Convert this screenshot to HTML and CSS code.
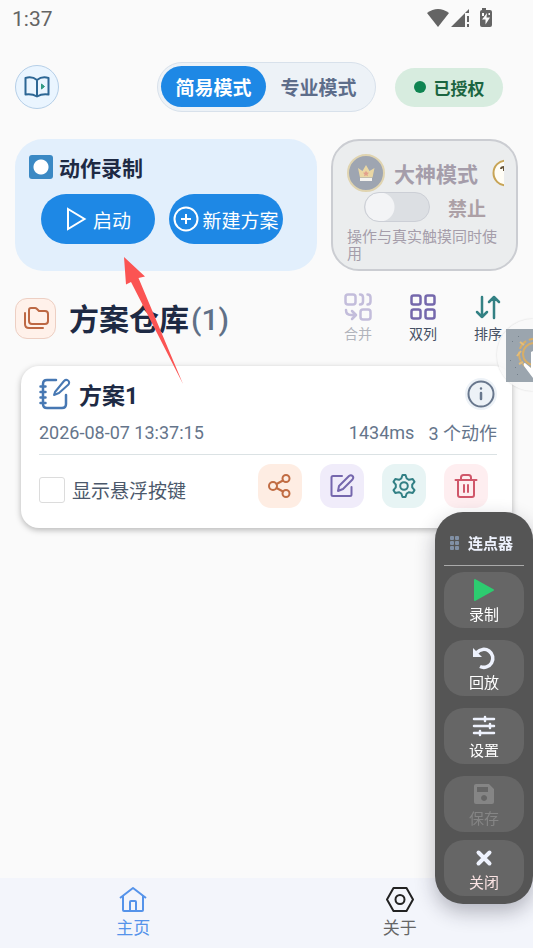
FILE: index.html
```html
<!DOCTYPE html>
<html lang="zh-CN">
<head>
<meta charset="utf-8">
<meta name="viewport" content="width=device-width, initial-scale=1">
<title>连点器</title>
<link rel="stylesheet" href="styles.css">
</head>
<body>
<div class="status">
  <span class="time">1:37</span>
  <svg class="status-icons" width="68" height="22" viewBox="0 0 68 22" fill="#646464">
    <path d="M0 5Q11-3 22 5L11 19Z"/>
    <path d="M24 19L38 5V19ZM38 5L42 1V5ZM40 8h2v6h-2zM40 16h2v3h-2z"/>
    <path d="M55 0h4v2h4q2 0 2 2v13q0 2-2 2h-8q-2 0-2-2V4q0-2 2-2Z"/>
    <path d="M60 5L55 11.500h3.500v5L63 9.500h-3.500Z" fill="#fafafa"/>
    <path d="M55 5h2v3h-2zM61.500 5h1.500v2h-1.500z" fill="#fafafa"/>
  </svg>
</div>

<header class="header">
  <button class="guide" type="button" aria-label="教程">
    <svg width="26" height="22" viewBox="0 0 26 22" fill="none" stroke="#2d6795" stroke-width="2" stroke-linejoin="round">
      <path d="M13 4Q8 0 1.500 2V18.500Q8 17.500 13 20.500Q18 17.500 24.500 18.500V2Q18 0 13 4ZV20"/>
      <path d="M17.500 8l3 2.500-3 2.500z" fill="#2f9a82" stroke="#2f9a82" stroke-width="1"/>
    </svg>
  </button>
  <div class="modes">
    <button class="mode mode-on" type="button">简易模式</button>
    <button class="mode" type="button">专业模式</button>
  </div>
  <div class="license"><span class="dot"></span>已授权</div>
</header>

<main class="main">
  <div class="panels">
    <section class="record">
      <h2 class="record-title"><span class="rec-icon"></span>动作录制</h2>
      <div class="record-actions">
        <button class="pill" type="button">
          <svg width="22" height="24" viewBox="0 0 22 24" fill="none" stroke="#fff" stroke-width="2"><path d="M3 2L19.500 12L3 22Z"/></svg>启动</button>
        <button class="pill pill-new" type="button">
          <svg width="26" height="26" viewBox="0 0 26 26" fill="none" stroke="#fff" stroke-width="2"><circle cx="13" cy="13" r="11.500"/><path d="M13 8v10M8 13h10"/></svg>新建方案</button>
      </div>
    </section>
    <section class="expert">
      <div class="expert-head">
        <svg class="crown" width="38" height="38" viewBox="0 0 38 38"><circle cx="19" cy="19" r="18" fill="#9ea5b1" stroke="#e0d4b0" stroke-width="2"/><path d="M11 14l4.500 3L19 11l3.500 6 5-3-2 9.500H13Z" fill="#ead7a4"/><path d="M19 16.500l1 2 2 .3-1.500 1.500.4 2-1.900-1-1.900 1 .4-2-1.500-1.500 2-.3Z" fill="#e2a08c"/><path d="M13 24h12v3H13Z" fill="#f5f3ef"/></svg>
        <h2 class="expert-title">大神模式</h2>
        <svg class="help" width="12" height="28" viewBox="0 0 12 28"><circle cx="14" cy="14" r="12.500" fill="#fffdf5" stroke="#c7a455" stroke-width="2"/><path d="M9 10q0-2 3-2v4" fill="none" stroke="#65533a" stroke-width="2"/></svg>
      </div>
      <label class="expert-switch"><input class="switch" type="checkbox" disabled>禁止</label>
      <p class="expert-note">操作与真实触摸同时使用</p>
    </section>
  </div>

  <div class="library">
    <span class="folder">
      <svg width="26" height="24" viewBox="0 0 26 24" fill="none" stroke="#bd6844" stroke-width="2" stroke-linejoin="round" stroke-linecap="round"><path d="M6 4q0-2 2-2h4q1 0 2 1l2 2h6q3 0 3 3v7q0 3-3 3H9q-3 0-3-3Z"/><path d="M2 7v11q0 4 4 4h14"/></svg>
    </span>
    <h1 class="library-title">方案仓库<span class="count">(1)</span></h1>
    <div class="tools">
      <button class="tool" type="button" disabled>
        <svg width="28" height="28" viewBox="0 0 28 28" fill="none" stroke="#c3bddb" stroke-width="2.500" stroke-linecap="round" stroke-linejoin="round"><rect x="1.500" y="1.500" width="10" height="10" rx="2.500"/><rect x="16.500" y="16.500" width="10" height="10" rx="2.500"/><path d="M16 1.500q3 0 3 3v4q0 3-3 3M23.500 1.500q3 0 3 3v4q0 3-3 3M2 17q0 5 5 5h4M8 18l4 4-4 4"/></svg>
        合并</button>
      <button class="tool" type="button">
        <svg width="28" height="28" viewBox="0 0 28 28" fill="none" stroke="#7568ac" stroke-width="2.500"><rect x="2.500" y="2.500" width="9" height="9" rx="2"/><rect x="16.500" y="2.500" width="9" height="9" rx="2"/><rect x="2.500" y="16.500" width="9" height="9" rx="2"/><rect x="16.500" y="16.500" width="9" height="9" rx="2"/></svg>
        双列</button>
      <button class="tool" type="button">
        <svg width="28" height="28" viewBox="0 0 28 28" fill="none" stroke="#338184" stroke-width="2.500" stroke-linecap="round" stroke-linejoin="round"><path d="M8 4v20M3 19l5 5 5-5M20 25V4M15 9l5-5 5 5"/></svg>
        排序</button>
    </div>
  </div>

  <article class="plan">
    <div class="plan-head">
      <svg width="32" height="32" viewBox="0 0 32 32" fill="none" stroke="#4778b3" stroke-width="2.500" stroke-linecap="round" stroke-linejoin="round"><path d="M17 2H8Q4 2 4 6v20q0 4 4 4h15q4 0 4-4V17"/><path d="M1.500 8.500h5M1.500 14h5M1.500 19.500h5M1.500 25h5"/><path d="M16 14l9-11q2-2 4-.5t.500 4L20 15l-5 2Z" stroke-width="2"/></svg>
      <h3 class="plan-title">方案1</h3>
      <button class="info" type="button" aria-label="详情">
        <svg width="32" height="32" viewBox="0 0 32 32"><circle cx="16" cy="16" r="16" fill="#edf2f7"/><circle cx="16" cy="16" r="12.500" fill="none" stroke="#68778d" stroke-width="2"/><path d="M16 15v6M16 10.500v.1" stroke="#68778d" stroke-width="2.500" stroke-linecap="round"/></svg>
      </button>
    </div>
    <div class="plan-meta"><time>2026-08-07 13:37:15</time><span class="duration">1434ms</span><span>3 个动作</span></div>
    <div class="plan-foot">
      <label class="show"><input class="check" type="checkbox">显示悬浮按键</label>
      <div class="plan-actions">
        <button class="act share" type="button" aria-label="分享"><svg width="26" height="26" viewBox="0 0 26 26"><circle cx="6" cy="13" r="4"/><circle cx="19" cy="5.500" r="3.500"/><circle cx="19" cy="20.500" r="3.500"/><path d="M9.500 11L16 7.500M9.500 15l6.500 3.500"/></svg></button>
        <button class="act edit" type="button" aria-label="编辑"><svg width="26" height="26" viewBox="0 0 26 26"><path d="M13 3H4Q2.500 3 2.500 4.500v17Q2.500 23 4 23h17q1.500 0 1.500-1.500V14"/><path d="M9 18l1-5L20 3q2-1.500 3.500 0t0 3.500L14 16Z"/></svg></button>
        <button class="act config" type="button" aria-label="设置"><svg width="26" height="26" viewBox="0 0 26 26"><circle cx="13" cy="13" r="3.800"/><path d="M11.500 2h3l1.200 3.500 2.300 1.300 3.700-.8 1.800 2.900-2.300 2.800v2.600l2.300 2.800-1.800 2.900-3.700-.8-2.300 1.300L14.500 24h-3l-1.200-3.500L8 19.200l-3.700.8-1.800-2.900 2.300-2.800v-2.600L2.500 8.900 4.300 6l3.700.8 2.300-1.300Z"/></svg></button>
        <button class="act remove" type="button" aria-label="删除"><svg width="26" height="26" viewBox="0 0 26 26"><path d="M2.500 7h21M8 7V4.500Q8 2 10.500 2h5Q18 2 18 4.500V7M5 7v15q0 2 2 2h12q2 0 2-2V7M11 12v7M15 12v7"/></svg></button>
      </div>
    </div>
  </article>
</main>

<nav class="tabs">
  <a class="tab tab-on" href="#home"><svg width="30" height="28" viewBox="0 0 30 28" fill="none" stroke="currentColor" stroke-width="2" stroke-linejoin="round"><path d="M2 13L15 3l13 10M5 11v14q0 1 1 1h18q1 0 1-1V11M12 26v-9q0-1 1-1h4q1 0 1 1v9"/></svg>主页</a>
  <a class="tab" href="#about"><svg width="30" height="28" viewBox="0 0 30 28" fill="none" stroke="#222" stroke-width="2" stroke-linejoin="round"><path d="M8.500 3h13L28 14.500 21.500 26h-13L2 14.500Z"/><circle cx="15" cy="14.500" r="4.500"/></svg>关于</a>
</nav>

<svg class="pointer" width="62" height="130" viewBox="0 0 62 130"><path d="M4 1L25 20.500L18.500 22L63 128L11 26L6 28.500Z" fill="#fb5453"/></svg>

<div class="bubble">
  <svg width="27" height="53" viewBox="0 0 27 53"><path d="M0 0h27v53H0Z" fill="#9ba5ae"/><g fill="none" stroke="#d7ae68"><circle cx="28" cy="25" r="15" stroke-width="2" stroke-dasharray="10 3"/><circle cx="28" cy="25" r="11" stroke-width="2"/></g><path d="M11 27l4-5M14 13l4 3M13 35l4-2" stroke="#e4bd79" stroke-width="2"/><path d="M25 23v16l-6-5q-2 0-1 3l9 12V22Z" fill="#fff"/><path d="M6 12h1v1H6zM9 38h1v1H9zM4 31h1v1H4zM11 45h1v1h-1zM12 7h1v1h-1z" fill="#737f8a"/></svg>
</div>

<aside class="float">
  <div class="float-title"><svg width="10" height="14" viewBox="0 0 10 14" fill="#8190a5"><rect width="4" height="4" rx="1"/><rect x="5" width="4" height="4" rx="1"/><rect y="5" width="4" height="4" rx="1"/><rect x="5" y="5" width="4" height="4" rx="1"/><rect y="10" width="4" height="4" rx="1"/><rect x="5" y="10" width="4" height="4" rx="1"/></svg>连点器</div>
  <button class="key" type="button"><svg width="24" height="24" viewBox="0 0 24 24"><path d="M3 2L21 12L3 22Z" fill="#2dcc70" stroke="#2dcc70" stroke-width="2" stroke-linejoin="round"/></svg>录制</button>
  <button class="key" type="button"><svg width="24" height="24" viewBox="0 0 24 24"><path d="M5 6.500A9 9 0 1 1 8 20.500" fill="none" stroke="#eef2fd" stroke-width="3.500"/><path d="M1 2v9h9Z" fill="#eef2fd"/></svg>回放</button>
  <button class="key" type="button"><svg width="24" height="24" viewBox="0 0 24 24" fill="none" stroke="#eef2fd" stroke-width="2.500" stroke-linecap="round"><path d="M2 5h20M2 12h20M2 19h20M13 3v4M18 10v4M8 17v4"/></svg>设置</button>
  <button class="key key-off" type="button" disabled><svg width="24" height="24" viewBox="0 0 24 24"><path fill="#858585" fill-rule="evenodd" d="M4 2h13l5 5v13q0 2-2 2H4q-2 0-2-2V4q0-2 2-2ZM5 5v5h11V5ZM12 13a3 3 0 1 0 .1 0Z"/></svg>保存</button>
  <button class="key key-close" type="button"><svg width="24" height="24" viewBox="0 0 24 24"><path d="M6.500 6.500l11 11M17.500 6.500l-11 11" stroke="#eef2fd" stroke-width="4" stroke-linecap="round"/></svg>关闭</button>
</aside>
</body>
</html>
```

FILE: styles.css
```css
* { box-sizing: border-box; }

body {
  margin: 0;
  min-height: 100vh;
  display: flex;
  flex-direction: column;
  overflow-x: hidden;
  background: #fafafa;
  color: #1e2a44;
  font-family: Roboto, "Noto Sans CJK SC", sans-serif;
}

button { margin: 0; padding: 0; border: 0; background: none; font: inherit; color: inherit; }
h1, h2, h3, p { margin: 0; }
svg { display: block; flex: none; }

.status {
  display: flex;
  align-items: center;
  justify-content: space-between;
  height: 38px;
  padding: 0 38px 0 12px;
  color: #646464;
  font-size: 21px;
}

.header {
  display: flex;
  align-items: center;
  height: 50px;
  margin-top: 24px;
  padding: 0 30px 0 15px;
}
.guide {
  display: grid;
  place-items: center;
  width: 44px;
  height: 44px;
  margin-right: auto;
  border: 1px solid #b5cfe8;
  border-radius: 50%;
  background: #eaf5ff;
}
.modes {
  display: flex;
  height: 50px;
  padding: 3px 4px 4px 3px;
  border: 1px solid #d8e1eb;
  border-radius: 25px;
  background: #edf2f7;
}
.mode {
  width: 105px;
  border-radius: 21px;
  color: #5d6d8a;
  font-size: 19px;
  font-weight: 700;
}
.mode-on { background: #1e88e5; color: #fff; }
.license {
  display: flex;
  align-items: center;
  justify-content: center;
  gap: 8px;
  width: 108px;
  height: 39px;
  margin-left: 19px;
  border-radius: 20px;
  background: #d7ecdf;
  color: #1b6541;
  font-size: 17px;
  font-weight: 700;
}
.dot { width: 12px; height: 12px; border-radius: 50%; background: #0e8451; }

.main { flex: 1; padding: 27px 15px 24px; }

.panels { display: grid; grid-template-columns: 302fr 187fr; gap: 14px; }
.record {
  min-width: 0;
  height: 132px;
  padding: 14px;
  border-radius: 28px;
  background: #e2effc;
}
.record-title {
  display: flex;
  align-items: center;
  gap: 6px;
  height: 28px;
  font-size: 21px;
  font-weight: 700;
}
.rec-icon {
  width: 24px;
  height: 24px;
  border-radius: 3px;
  background: radial-gradient(circle, #fff 7px, #3b89c4 8px);
}
.record-actions { display: flex; gap: 14px; margin: 13px 12px 0; }
.pill {
  display: flex;
  align-items: center;
  justify-content: center;
  gap: 6px;
  width: 114px;
  height: 50px;
  border-radius: 25px;
  background: #1e88e5;
  color: #fff;
  font-size: 19px;
  white-space: nowrap;
}
.pill-new { gap: 3px; }

.expert {
  min-width: 0;
  height: 132px;
  padding: 13px 12px 0 14px;
  border: 2px solid #cbcdd2;
  border-radius: 28px;
  background: #ebedee;
  color: #a59daa;
}
.expert-head { display: flex; align-items: center; height: 38px; }
.expert-title { margin: 0 auto 0 9px; font-size: 21px; font-weight: 700; }
.expert-switch {
  display: flex;
  align-items: center;
  gap: 18px;
  height: 30px;
  padding-left: 17px;
  color: #aca0a6;
  font-size: 19px;
  font-weight: 700;
}
.switch {
  appearance: none;
  width: 66px;
  height: 30px;
  margin: 0;
  border: 1px solid #cccfd6;
  border-radius: 15px;
  background: radial-gradient(circle at 15px 14px, #f3f4f6 14px, transparent 15px) #dcdfe3;
}
.expert-note { margin-top: 7px; font-size: 15px; line-height: 17px; }

.library { display: flex; align-items: center; height: 54px; margin-top: 20px; }
.folder {
  display: grid;
  place-items: center;
  width: 41px;
  height: 41px;
  border: 1px solid #edcfc3;
  border-radius: 12px;
  background: #fff1ea;
}
.library-title { margin-left: 13px; padding-bottom: 3px; font-size: 30px; font-weight: 700; }
.count { margin-left: 2px; color: #5f7087; font-weight: 500; }
.tools { display: flex; gap: 25px; margin-left: auto; padding-right: 10px; }
.tool {
  display: flex;
  flex-direction: column;
  align-items: center;
  gap: 3px;
  width: 40px;
  color: #465164;
  font-size: 14px;
  line-height: 20px;
}
.tool:disabled { color: #b1b4bc; }

.plan {
  margin: 21px 6px 0;
  padding: 12px 15px 20px 18px;
  border-radius: 18px;
  background: #fff;
  box-shadow: 0 2px 6px rgba(0, 0, 0, 0.28);
}
.plan-head { display: flex; align-items: center; gap: 8px; height: 32px; }
.plan-title { font-size: 23px; font-weight: 700; }
.info { margin-left: auto; }
.plan-meta {
  display: flex;
  align-items: center;
  height: 45px;
  border-bottom: 1px solid #dbe2e4;
  color: #65758b;
  font-size: 18px;
}
.duration { margin: 0 14px 0 auto; }
.plan-foot { display: flex; align-items: center; justify-content: space-between; margin-top: 9px; }
.show {
  display: flex;
  align-items: center;
  gap: 7px;
  padding-top: 7px;
  color: #4b586b;
  font-size: 19px;
}
.check {
  appearance: none;
  width: 26px;
  height: 26px;
  margin: 0;
  border: 1px solid #dcdcdc;
  border-radius: 3px;
  background: #fff;
}
.plan-actions { display: flex; gap: 18px; padding-right: 9px; }
.act { display: grid; place-items: center; width: 44px; height: 44px; border-radius: 13px; }
.act svg {
  fill: none;
  stroke: currentColor;
  stroke-width: 2;
  stroke-linecap: round;
  stroke-linejoin: round;
}
.share { background: #feede3; color: #c16c43; }
.edit { background: #f0ecfa; color: #7567ad; }
.config { background: #e7f4f4; color: #328085; }
.remove { background: #feeef0; color: #d0576a; }

.tabs { display: flex; height: 70px; background: #f3f5fb; }
.tab {
  flex: 1;
  display: flex;
  flex-direction: column;
  align-items: center;
  gap: 2px;
  padding-top: 7px;
  color: #666;
  font-size: 17px;
  line-height: 27px;
  text-decoration: none;
}
.tab-on { color: #5593ea; }

.pointer { position: absolute; top: 256px; left: 120px; pointer-events: none; overflow: visible; }

.bubble {
  position: fixed;
  top: 319px;
  right: 0;
  width: 36px;
  height: 72px;
  padding: 10px 0 0 9px;
  border-radius: 36px 0 0 36px;
  background: rgba(248, 248, 248, 0.85);
  box-shadow: 0 0 2px rgba(0, 0, 0, 0.18);
}

.float {
  position: fixed;
  top: 512px;
  right: 0;
  display: flex;
  flex-direction: column;
  gap: 12px;
  width: 98px;
  padding: 12px 9px 8px;
  border-radius: 28px;
  background: #555;
  box-shadow: 0 8px 20px rgba(30, 30, 50, 0.3);
  color: #fff;
}
.float-title {
  display: flex;
  align-items: center;
  justify-content: center;
  gap: 8px;
  height: 42px;
  margin-bottom: -6px;
  padding: 0 5px 4px 0;
  border-bottom: 1px solid #aaa;
  color: #eef2fd;
  font-size: 15px;
  font-weight: 700;
}
.key {
  display: flex;
  flex-direction: column;
  align-items: center;
  height: 56px;
  padding-top: 6px;
  border-radius: 20px;
  background: #666;
  font-size: 15px;
  line-height: 26px;
}
.key-off { color: #858585; }
.key-close { margin-top: -4px; color: #fbe3e3; }
```
